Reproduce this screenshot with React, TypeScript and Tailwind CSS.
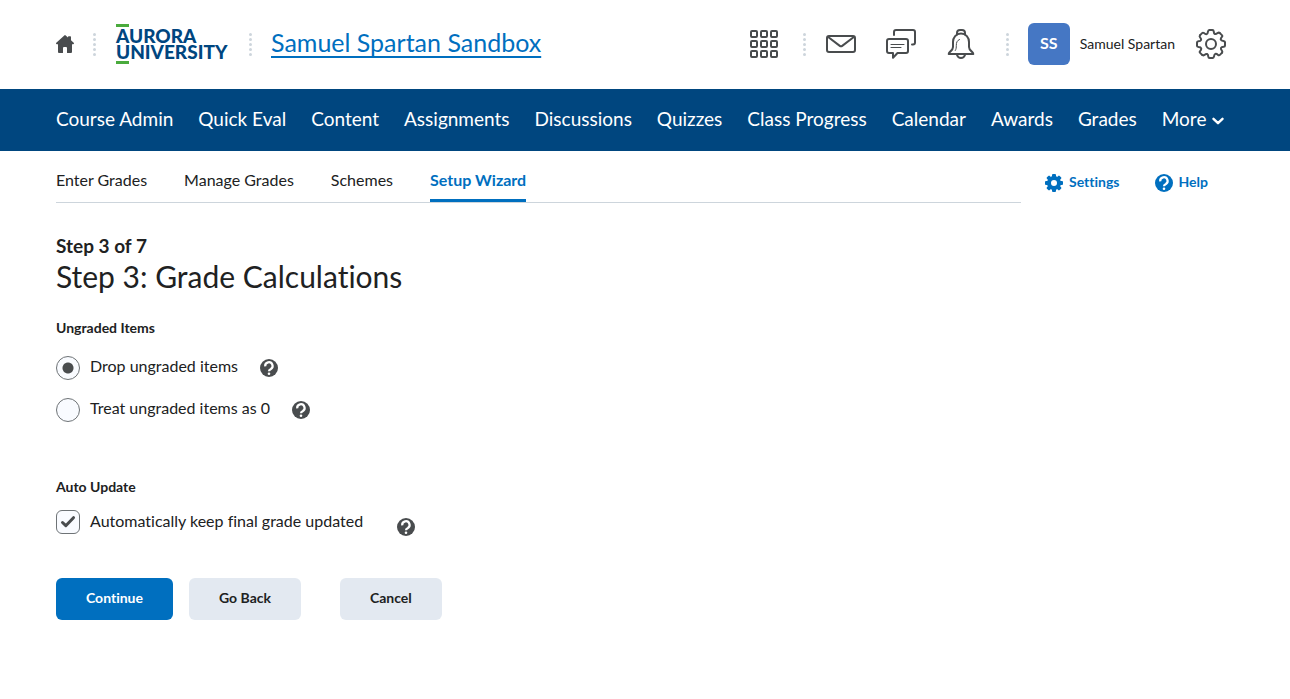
import { useState } from 'react';

const NAV_LINKS = [
  'Course Admin', 'Quick Eval', 'Content', 'Assignments', 'Discussions',
  'Quizzes', 'Class Progress', 'Calendar', 'Awards', 'Grades',
];

const TABS = ['Enter Grades', 'Manage Grades', 'Schemes', 'Setup Wizard'];

const DOTS = [0, 1, 2, 3, 4];
const TEETH = [0, 45, 90, 135, 180, 225, 270, 315];

// ── Icons ─────────────────────────────────────────────────
function HomeIcon() {
  return (
    <svg width="18" height="18" viewBox="0 0 18 18" fill="#494c4e">
      <path d="M8.3.4a1 1 0 0 1 1.4 0L12 2.4V2a.7.7 0 0 1 .7-.7h1.6A.7.7 0 0 1 15 2v3.2l2.7 2.6a.8.8 0 0 1-.6 1.4H16V17a1 1 0 0 1-1 1h-3.5a.5.5 0 0 1-.5-.5V13a1 1 0 0 0-1-1H8a1 1 0 0 0-1 1v4.500a.5.5 0 0 1-.5.500H3a1 1 0 0 1-1-1V9.200H.9a.8.8 0 0 1-.6-1.400z" />
    </svg>
  );
}

function AppsIcon() {
  return (
    <svg width="28" height="28" viewBox="0 0 28 28" fill="none" stroke="#494c4e" strokeWidth="2">
      {[1, 11, 21].map(y =>
        [1, 11, 21].map(x => <rect key={`${x}-${y}`} x={x} y={y} width="6" height="6" rx="1" />)
      )}
    </svg>
  );
}

function MailIcon() {
  return (
    <svg width="30" height="30" viewBox="0 0 30 30" fill="none" stroke="#494c4e" strokeWidth="2" strokeLinejoin="round">
      <rect x="1" y="7" width="28" height="16" rx="2" />
      <path d="M1.500 7.500 13.800 16.900a2 2 0 0 0 2.400 0L28.500 7.500" />
    </svg>
  );
}

function ChatIcon() {
  return (
    <svg width="30" height="30" viewBox="0 0 30 30" fill="none" stroke="#494c4e" strokeWidth="2" strokeLinecap="round" strokeLinejoin="round">
      <path d="M8 6V3a2 2 0 0 1 2-2h17a2 2 0 0 1 2 2v10.500a2 2 0 0 1-2 2h-1" />
      <path d="M3 10h17a2 2 0 0 1 2 2v10a2 2 0 0 1-2 2h-8.500L7 28.800V24H3a2 2 0 0 1-2-2V12a2 2 0 0 1 2-2z" />
      <path d="M5 15.500h13M5 18.500h10" strokeWidth="1" />
    </svg>
  );
}

function BellIcon() {
  return (
    <svg width="30" height="30" viewBox="0 0 30 30" fill="none" stroke="#494c4e" strokeWidth="2" strokeLinecap="round" strokeLinejoin="round">
      <path d="M11 5.500V4a3 3 0 0 1 3-3h2a3 3 0 0 1 3 3v1.500" />
      <path d="M15 4.500c-5 0-8 4-8 8.500v5c0 4-4.300 4.500-4.300 7h24.600c0-2.500-4.300-3-4.300-7v-5c0-4.500-3-8.500-8-8.500z" />
      <path d="M11 26c.6 1.800 2.100 3 4 3s3.400-1.200 4-3" />
      <path d="M13.500 10.500c-2.500 1-3.200 3-3.200 6 0 2 0 3.500-1 5" strokeWidth="1" />
    </svg>
  );
}

// one eighth of the outline, repeated around the centre
function GearOutlineIcon() {
  return (
    <svg width="30" height="30" viewBox="0 0 30 30" fill="none" stroke="#494c4e" strokeWidth="2" strokeLinecap="round">
      {TEETH.map(a => (
        <path
          key={a}
          transform={`rotate(${a} 15 15)`}
          d="M13.600 1h2.800Q17.600 1 17.700 2.300C17.900 5.300 19.400 5.900 21.600 4.100Q22.900 3.100 23.900 4.100"
        />
      ))}
      <circle cx="15" cy="15" r="5" />
    </svg>
  );
}

function GearIcon() {
  return (
    <svg width="18" height="18" viewBox="0 0 18 18" fill="#006fbf">
      <circle cx="9" cy="9" r="5" fill="none" stroke="#006fbf" strokeWidth="4" />
      {TEETH.map(a => (
        <rect key={a} x="7" y="0" width="4" height="4" rx="1" transform={`rotate(${a} 9 9)`} />
      ))}
    </svg>
  );
}

function HelpIcon() {
  return (
    <svg width="18" height="18" viewBox="0 0 18 18" fill="none">
      <circle cx="9" cy="9" r="9" fill="currentColor" />
      <path d="M5.200 7.300A3.700 3.700 0 1 1 10.600 10.200Q9 10.900 9 12.200" stroke="#fff" strokeWidth="2.200" />
      <circle cx="9" cy="14.700" r="1.300" fill="#fff" />
    </svg>
  );
}

function ChevronIcon() {
  return (
    <svg width="12" height="8" viewBox="0 0 12 8" fill="none" stroke="#fff" strokeWidth="2.400" strokeLinecap="round" strokeLinejoin="round">
      <path d="M1.500 1.800 6 6.200l4.500-4.400" />
    </svg>
  );
}

// ── Small pieces ──────────────────────────────────────────
function Separator() {
  return (
    <div className="flex flex-col gap-0.5 shrink-0">
      {DOTS.map(i => <span key={i} className="w-[3px] h-[3px] rounded-full bg-[#cdd5dc]" />)}
    </div>
  );
}

function Logo() {
  return (
    <a href="#" className="block shrink-0 w-[113px] font-black text-[19px] leading-[16px] text-[#00467f]">
      <span className="block w-[13px] h-[3px] mb-px bg-[#4aab3d]" />
      <span className="block">AURORA</span>
      <span className="block">UNIVERSITY</span>
      <span className="block w-[13px] h-[3px] mt-px bg-[#4aab3d]" />
    </a>
  );
}

function HelpButton({ label }: { label: string }) {
  return (
    <button aria-label={label} className="text-[#494c4e] cursor-pointer">
      <HelpIcon />
    </button>
  );
}

type RadioProps = { id: string; label: string; checked: boolean; onChange: () => void };

function RadioRow({ id, label, checked, onChange }: RadioProps) {
  return (
    <div className="flex items-center h-6">
      <input
        id={id}
        type="radio"
        name="ungraded"
        checked={checked}
        onChange={onChange}
        className="appearance-none w-6 h-6 shrink-0 rounded-full border border-[#6e7376] bg-[#f9fbff] checked:bg-[radial-gradient(circle,#494c4e_5px,transparent_6px)]"
      />
      <label htmlFor={id} className="ml-2.5 mr-[22px] pb-1 text-[16px] leading-5">{label}</label>
      <HelpButton label={`Help: ${label}`} />
    </div>
  );
}

export default function App() {
  const [ungraded, setUngraded] = useState('drop');
  const [autoUpdate, setAutoUpdate] = useState(true);

  return (
    <div className="min-h-screen bg-white text-[#202122] font-['Lato',sans-serif] [font-variant-ligatures:none]">

      {/* ── Header ── */}
      <header className="flex items-center justify-between h-[89px] pl-14 pr-16 pb-px">
        <div className="flex items-center">
          <a href="#" aria-label="Home" className="mr-[19px]"><HomeIcon /></a>
          <Separator />
          <div className="mx-5"><Logo /></div>
          <Separator />
          <a href="#" className="ml-[19px] pb-1 text-[25px] leading-8 text-[#006fbf] underline decoration-2 underline-offset-4">
            Samuel Spartan Sandbox
          </a>
        </div>
        <div className="flex items-center">
          <button aria-label="Select a course" className="mr-[25px]"><AppsIcon /></button>
          <Separator />
          <div className="flex gap-[30px] ml-5 mr-[30px]">
            <button aria-label="Messages"><MailIcon /></button>
            <button aria-label="Subscriptions"><ChatIcon /></button>
            <button aria-label="Notifications"><BellIcon /></button>
          </div>
          <Separator />
          <button className="flex items-center gap-2.5 ml-[19px] mr-[21px]">
            <span className="flex items-center justify-center w-[42px] h-[42px] pb-0.5 rounded-md bg-[#4577c4] text-white text-[16px] font-bold">SS</span>
            <span className="pb-0.5 text-[14px]">Samuel Spartan</span>
          </button>
          <button aria-label="Admin tools"><GearOutlineIcon /></button>
        </div>
      </header>

      {/* ── Course nav ── */}
      <nav className="flex items-center gap-[25px] h-[62px] px-14 pb-0.5 bg-[#00467f] text-white text-[19px] leading-6 whitespace-nowrap">
        {NAV_LINKS.map(l => <a key={l} href="#">{l}</a>)}
        <button className="flex items-center gap-1.5">
          More
          <span className="pt-1"><ChevronIcon /></span>
        </button>
      </nav>

      {/* ── Tabs ── */}
      <div className="flex items-start pl-14 pr-[82px]">
        <div className="flex flex-1 gap-[37px] h-[52px] border-b border-[#cdd5dc] text-[16px] leading-6">
          {TABS.map(t => (
            <a
              key={t}
              href="#"
              className={
                t === 'Setup Wizard'
                  ? 'pt-[17px] border-b-3 border-[#006fbf] text-[#006fbf] font-bold'
                  : 'pt-[17px]'
              }
            >
              {t}
            </a>
          ))}
        </div>
        <div className="flex gap-[35px] ml-6 pt-[21px] text-[14px] leading-5 font-bold text-[#006fbf]">
          <a href="#" className="flex items-center gap-1.5"><GearIcon /><span className="pb-0.5">Settings</span></a>
          <a href="#" className="flex items-center gap-1.5"><HelpIcon /><span className="pb-0.5">Help</span></a>
        </div>
      </div>

      {/* ── Wizard step ── */}
      <main className="px-14 pt-[31px]">
        <p className="text-[19px] leading-6 font-bold">Step 3 of 7</p>
        <h1 className="text-[30px] leading-9">Step 3: Grade Calculations</h1>

        <fieldset className="mt-6">
          <legend className="text-[14px] leading-5 font-bold">Ungraded Items</legend>
          <div className="flex flex-col gap-[18px] pt-[18px]">
            <RadioRow id="drop" label="Drop ungraded items" checked={ungraded === 'drop'} onChange={() => setUngraded('drop')} />
            <RadioRow id="zero" label="Treat ungraded items as 0" checked={ungraded === 'zero'} onChange={() => setUngraded('zero')} />
          </div>
        </fieldset>

        <fieldset className="mt-[55px]">
          <legend className="text-[14px] leading-5 font-bold">Auto Update</legend>
          <div className="flex items-start pt-[13px]">
            <span className="relative w-6 h-6 shrink-0">
              <input
                id="auto"
                type="checkbox"
                checked={autoUpdate}
                onChange={e => setAutoUpdate(e.target.checked)}
                className="block appearance-none w-6 h-6 rounded-md border border-[#6e7376] bg-[#f9fbff]"
              />
              {autoUpdate && (
                <svg className="absolute inset-0 pointer-events-none" width="24" height="24" viewBox="0 0 24 24" fill="none" stroke="#494c4e" strokeWidth="3" strokeLinecap="round" strokeLinejoin="round">
                  <path d="m6.500 12.500 3.300 3.200 7.700-8" />
                </svg>
              )}
            </span>
            <label htmlFor="auto" className="ml-2.5 mr-[34px] text-[16px] leading-[22px]">Automatically keep final grade updated</label>
            <div className="pt-2"><HelpButton label="Help: Auto Update" /></div>
          </div>
        </fieldset>

        <div className="flex mt-9 text-[14px] leading-5 font-bold">
          <button className="h-[42px] px-[30px] pb-0.5 rounded-md bg-[#006fbf] text-white">Continue</button>
          <button className="h-[42px] px-[30px] pb-0.5 ml-4 rounded-md bg-[#e3e9f1]">Go Back</button>
          <button className="h-[42px] px-[30px] pb-0.5 ml-[39px] rounded-md bg-[#e3e9f1]">Cancel</button>
        </div>
      </main>
    </div>
  );
}
